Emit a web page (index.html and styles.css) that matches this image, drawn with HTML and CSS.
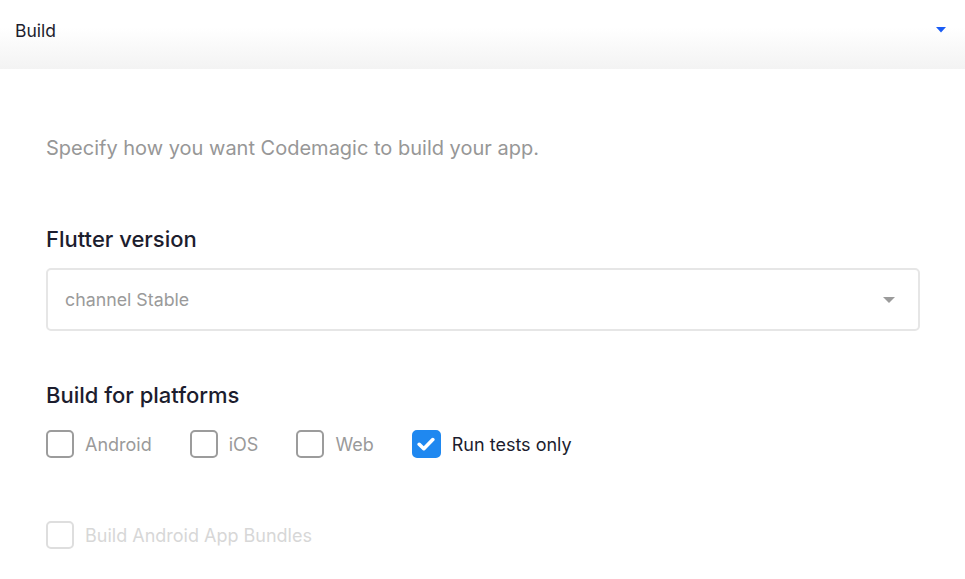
FILE: index.html
```html
<!DOCTYPE html>
<html lang="en">
<head>
<meta charset="utf-8">
<title>Build</title>
<link rel="stylesheet" href="styles.css">
</head>
<body>
<header class="section-header">
  <span class="section-title">Build</span>
  <svg class="caret" width="10" height="6" viewBox="0 0 10 6"><path d="M0 0h10L5 5.5z" fill="#1a5cf5"/></svg>
</header>
<main class="content">
  <p class="intro">Specify how you want Codemagic to build your app.</p>
  <h2 class="label label-flutter">Flutter version</h2>
  <div class="select">
    <span class="select-value">channel Stable</span>
    <svg class="select-caret" width="12" height="6" viewBox="0 0 12 6"><path d="M0 0h12L6 6z" fill="#9b9b9b"/></svg>
  </div>
  <h2 class="label label-platforms">Build for platforms</h2>
  <div class="platforms">
    <label class="check"><span class="box"></span><span class="check-text">Android</span></label>
    <label class="check"><span class="box"></span><span class="check-text">iOS</span></label>
    <label class="check"><span class="box"></span><span class="check-text">Web</span></label>
    <label class="check checked"><span class="box"><svg width="18" height="14" viewBox="0 0 18 14"><path d="M2.2 7.3l4.6 4.4L15.8 2.6" fill="none" stroke="#fff" stroke-width="3.6" stroke-linecap="round" stroke-linejoin="round"/></svg></span><span class="check-text">Run tests only</span></label>
  </div>
  <label class="check disabled bundles"><span class="box"></span><span class="check-text">Build Android App Bundles</span></label>
</main>
</body>
</html>
```
FILE: styles.css
```css
* { box-sizing: border-box; }
html, body { margin: 0; padding: 0; background: #fff; }
body {
  font-family: Inter, "Noto Sans", sans-serif;
  color: #1c1d2e;
  width: 965px;
  height: 579px;
  overflow: hidden;
}
.section-header {
  height: 69px;
  display: flex;
  align-items: center;
  justify-content: space-between;
  padding: 0 19px 8px 15px;
  background: linear-gradient(to bottom, #ffffff 0%, #ffffff 40%, #f3f3f3 100%);
}
.section-title {
  font-size: 17.5px;
  color: #1c1d2e;
}
.caret { margin-top: -2px; }
.content {
  padding: 0 45px 0 46px;
}
.intro {
  margin: 66px 0 0;
  font-size: 20px;
  line-height: 26px;
  color: #979797;
}
.label {
  margin: 0;
  font-weight: 500;
  font-size: 22px;
  line-height: 26px;
  color: #1c1d2e;
}
.label-flutter { margin-top: 65px; }
.select {
  margin-top: 16px;
  height: 63px;
  border: 2px solid #e6e6e6;
  border-radius: 5px;
  display: flex;
  align-items: center;
  justify-content: space-between;
  padding: 0 23px 0 17px;
}
.select-value {
  font-size: 17.8px;
  color: #9a9a9a;
}
.label-platforms { margin-top: 51px; }
.platforms {
  display: flex;
  gap: 38px;
  margin-top: 22px;
}
.check {
  display: flex;
  align-items: center;
  gap: 11px;
  font-size: 18px;
  color: #9a9a9a;
}
.box {
  width: 28px;
  height: 28px;
  border: 2px solid #9c9c9c;
  border-radius: 5px;
  display: flex;
  align-items: center;
  justify-content: center;
}
.checked .box {
  width: 29px;
  background: #1f88f0;
  border-color: #1f88f0;
}
.checked .check-text { color: #1c1d2e; }
.disabled { color: #d7d7d7; }
.disabled .box { border-color: #dedede; }
.bundles { margin-top: 63px; }
```
